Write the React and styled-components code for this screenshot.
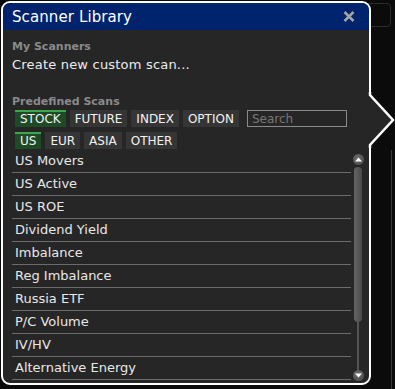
import styled, { createGlobalStyle } from "styled-components";

const GlobalStyle = createGlobalStyle`
  html, body {
    margin: 0;
    padding: 0;
    background: #0b0b0b;
    width: 395px;
    height: 389px;
    overflow: hidden;
  }
  body {
    font-family: "DejaVu Sans", Verdana, sans-serif;
  }
`;

const categoryTabs = ["STOCK", "FUTURE", "INDEX", "OPTION"];
const regionTabs = ["US", "EUR", "ASIA", "OTHER"];
const scans = [
  "US Movers",
  "US Active",
  "US ROE",
  "Dividend Yield",
  "Imbalance",
  "Reg Imbalance",
  "Russia ETF",
  "P/C Volume",
  "IV/HV",
  "Alternative Energy",
];

const Screen = styled.div`
  position: relative;
  width: 395px;
  height: 389px;
  padding: 1px 0 0 1px;
  box-sizing: border-box;
`;

const BackdropLine = styled.div`
  position: absolute;
  top: 150px;
  left: 391px;
  width: 1px;
  height: 239px;
  background: #3a3a3a;
`;

const BackdropButton = styled.div`
  position: absolute;
  top: 3px;
  left: 366px;
  width: 23px;
  height: 22px;
  border: 1px solid #2c2c2c;
  border-radius: 4px;
`;

const Panel = styled.div`
  position: relative;
  width: 370px;
  height: 384px;
  box-sizing: border-box;
  border: 2px solid #ffffff;
  border-radius: 9px;
  background: #262626;
  display: flex;
  flex-direction: column;
`;

const TitleBar = styled.div`
  height: 27px;
  flex: none;
  background: #00236e;
  border-radius: 7px 7px 0 0;
  display: flex;
  align-items: center;
  justify-content: space-between;
  padding: 0 14px 0 9px;
  color: #ffffff;
  font-size: 15px;
`;

const Title = styled.span`
  margin-top: 1px;
  letter-spacing: 0.1px;
`;

const CloseButton = styled.button`
  background: none;
  border: none;
  padding: 0;
  display: flex;
  cursor: pointer;
`;

const Body = styled.div`
  flex: 1;
  min-height: 0;
  display: flex;
  flex-direction: column;
  padding: 0 5px 0 9px;
`;

const SectionLabel = styled.div`
  font-size: 11px;
  line-height: 13px;
  font-weight: bold;
  color: #8a8a8a;
  margin-top: ${({ $top }) => $top}px;
`;

const CreateLink = styled.div`
  font-size: 13px;
  line-height: 16px;
  letter-spacing: 0.2px;
  color: #ececec;
  margin-top: 4px;
  cursor: pointer;
`;

const TabRow = styled.div`
  display: flex;
  gap: 4px;
  margin: ${({ $top }) => $top}px 0 0 3px;
`;

const Tab = styled.div`
  height: 17px;
  box-sizing: border-box;
  padding: 0 5px;
  border-top: 2px solid ${({ $active }) => ($active ? "#3ea64c" : "#353535")};
  background: ${({ $active }) => ($active ? "#1e4a25" : "#353535")};
  color: #f2f2f2;
  font-size: 12px;
  line-height: 15px;
  cursor: pointer;
`;

const SearchBox = styled.input`
  margin: 0 17px 0 auto;
  width: 100px;
  height: 17px;
  box-sizing: border-box;
  border: 1px solid #8a8a8a;
  background: transparent;
  color: #dddddd;
  font-family: "DejaVu Sans", Verdana, sans-serif;
  font-size: 12px;
  padding: 0 4px;
  outline: none;

  &::placeholder {
    color: #777777;
  }
`;

const ListArea = styled.div`
  flex: 1;
  min-height: 0;
  margin-top: 1px;
  display: flex;
  gap: 1px;
`;

const ScanList = styled.div`
  flex: 1;
  overflow: hidden;
`;

const ScanRow = styled.div`
  height: 23px;
  box-sizing: border-box;
  border-bottom: 1px solid #6c6c6c;
  padding-left: 3px;
  font-size: 13px;
  line-height: 22px;
  color: #e8e8e8;
  white-space: nowrap;
  cursor: pointer;
`;

const ScrollBar = styled.div`
  width: 12px;
  display: flex;
  flex-direction: column;
  align-items: center;
  padding: 4px 0 2px;
`;

const ScrollButton = styled.div`
  width: 11px;
  height: 11px;
  flex: none;
  border-radius: 50%;
  background: radial-gradient(circle at 40% 35%, #6a6a6a, #474747);
  display: flex;
  align-items: center;
  justify-content: center;
`;

const Thumb = styled.div`
  width: 8px;
  height: 155px;
  margin-top: 2px;
  flex: none;
  border-radius: 4px;
  background: linear-gradient(to right, #646464, #4a4a4a);
`;

const Track = styled.div`
  flex: 1;
  width: 2px;
  background: #545454;
`;

const Pointer = styled.svg`
  position: absolute;
  left: 363px;
  top: 89px;
`;

const Triangle = ({ down }) => (
  <svg width="7" height="5" viewBox="0 0 7 5">
    <polygon
      points={down ? "0,0.5 7,0.5 3.5,4.5" : "0,4.5 7,4.5 3.5,0.5"}
      fill="#ffffff"
    />
  </svg>
);

export default function App() {
  return (
    <Screen>
      <GlobalStyle />
      <BackdropButton />
      <BackdropLine />
      <Panel>
        <TitleBar>
          <Title>Scanner Library</Title>
          <CloseButton aria-label="Close">
            <svg width="12" height="11" viewBox="0 0 12 11">
              <path
                d="M1.5 1 L10.5 10 M10.5 1 L1.5 10"
                stroke="#a3a3a3"
                strokeWidth="2.6"
              />
            </svg>
          </CloseButton>
        </TitleBar>
        <Body>
          <SectionLabel $top={10}>My Scanners</SectionLabel>
          <CreateLink>Create new custom scan...</CreateLink>
          <SectionLabel $top={22}>Predefined Scans</SectionLabel>
          <TabRow $top={2}>
            {categoryTabs.map((t, i) => (
              <Tab key={t} $active={i === 0}>
                {t}
              </Tab>
            ))}
            <SearchBox placeholder="Search" />
          </TabRow>
          <TabRow $top={5}>
            {regionTabs.map((t, i) => (
              <Tab key={t} $active={i === 0}>
                {t}
              </Tab>
            ))}
          </TabRow>
          <ListArea>
            <ScanList>
              {scans.map((s) => (
                <ScanRow key={s}>{s}</ScanRow>
              ))}
            </ScanList>
            <ScrollBar>
              <ScrollButton>
                <Triangle />
              </ScrollButton>
              <Thumb />
              <Track />
              <ScrollButton>
                <Triangle down />
              </ScrollButton>
            </ScrollBar>
          </ListArea>
        </Body>
        <Pointer width="30" height="56" viewBox="0 0 30 56">
          <polygon points="0,3 4,3 27,28 4,53 0,53" fill="#262626" />
          <polyline
            points="4,0 4,3 27,28 4,53 4,56"
            fill="none"
            stroke="#ffffff"
            strokeWidth="2.5"
          />
        </Pointer>
      </Panel>
    </Screen>
  );
}
